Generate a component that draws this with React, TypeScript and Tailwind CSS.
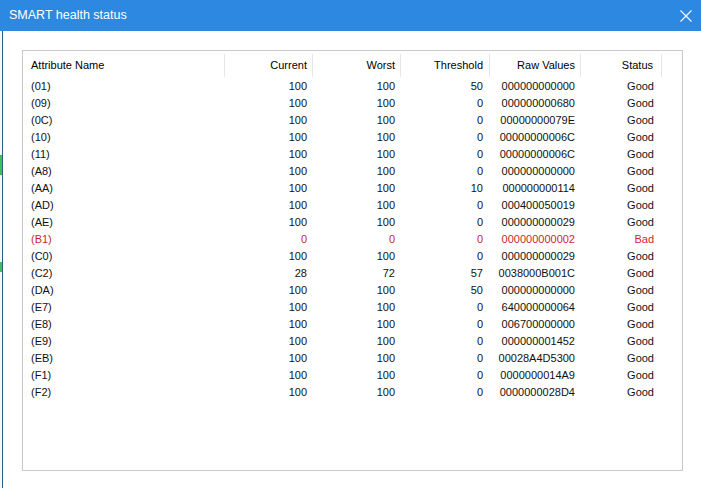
import React from 'react';

type Row = {
  id: string;
  current: string;
  worst: string;
  threshold: string;
  raw: string;
  status: string;
};

const rows: Row[] = [
  { id: '(01)', current: '100', worst: '100', threshold: '50', raw: '000000000000', status: 'Good' },
  { id: '(09)', current: '100', worst: '100', threshold: '0', raw: '000000000680', status: 'Good' },
  { id: '(0C)', current: '100', worst: '100', threshold: '0', raw: '00000000079E', status: 'Good' },
  { id: '(10)', current: '100', worst: '100', threshold: '0', raw: '00000000006C', status: 'Good' },
  { id: '(11)', current: '100', worst: '100', threshold: '0', raw: '00000000006C', status: 'Good' },
  { id: '(A8)', current: '100', worst: '100', threshold: '0', raw: '000000000000', status: 'Good' },
  { id: '(AA)', current: '100', worst: '100', threshold: '10', raw: '000000000114', status: 'Good' },
  { id: '(AD)', current: '100', worst: '100', threshold: '0', raw: '000400050019', status: 'Good' },
  { id: '(AE)', current: '100', worst: '100', threshold: '0', raw: '000000000029', status: 'Good' },
  { id: '(B1)', current: '0', worst: '0', threshold: '0', raw: '000000000002', status: 'Bad' },
  { id: '(C0)', current: '100', worst: '100', threshold: '0', raw: '000000000029', status: 'Good' },
  { id: '(C2)', current: '28', worst: '72', threshold: '57', raw: '0038000B001C', status: 'Good' },
  { id: '(DA)', current: '100', worst: '100', threshold: '50', raw: '000000000000', status: 'Good' },
  { id: '(E7)', current: '100', worst: '100', threshold: '0', raw: '640000000064', status: 'Good' },
  { id: '(E8)', current: '100', worst: '100', threshold: '0', raw: '006700000000', status: 'Good' },
  { id: '(E9)', current: '100', worst: '100', threshold: '0', raw: '000000001452', status: 'Good' },
  { id: '(EB)', current: '100', worst: '100', threshold: '0', raw: '00028A4D5300', status: 'Good' },
  { id: '(F1)', current: '100', worst: '100', threshold: '0', raw: '0000000014A9', status: 'Good' },
  { id: '(F2)', current: '100', worst: '100', threshold: '0', raw: '0000000028D4', status: 'Good' },
];

const CloseIcon = () => (
  <svg width="12" height="12" viewBox="0 0 12 12" fill="none">
    <path d="M0.5 0.5 L11.5 11.5 M11.5 0.5 L0.5 11.5" stroke="white" strokeWidth="1.1" />
  </svg>
);

const App: React.FC = () => {
  return (
    <div
      className="w-[701px] h-[488px] bg-white flex flex-col overflow-hidden text-black"
      style={{ fontFamily: '"Segoe UI", "Liberation Sans", Arial, sans-serif' }}
    >
      {/* title bar */}
      <div className="h-[31px] bg-[#2c88e0] flex items-center justify-between pl-[9px] pr-[9px] shrink-0">
        <span className="text-white text-[12.5px] leading-none">SMART health status</span>
        <CloseIcon />
      </div>

      <div className="flex flex-1">
        {/* bits of the window behind */}
        <div className="w-[2px] flex flex-col bg-[#f4f8f6]">
          <div className="h-[124px]" />
          <div className="h-[20px] bg-[#3cbf5c]" />
          <div className="h-[87px]" />
          <div className="h-[10px] bg-[#3cbf5c]" />
        </div>
        <div className="flex-1 border-l border-[#2f5c7c] pl-[19px] pt-[19px]">
          {/* list view */}
          <div className="w-[661px] h-[421px] border border-[#c9c9c9] text-[11px] leading-none">
            <div className="h-[27px] flex pt-[3px] pb-[1px]">
              <div className="w-[202px] h-[23px] border-r border-[#e6e6e6] pl-[8px] flex items-center">Attribute Name</div>
              <div className="w-[88px] h-[23px] border-r border-[#e6e6e6] pr-[5px] flex items-center justify-end">Current</div>
              <div className="w-[88px] h-[23px] border-r border-[#e6e6e6] pr-[5px] flex items-center justify-end">Worst</div>
              <div className="w-[89px] h-[23px] border-r border-[#e6e6e6] pr-[6px] flex items-center justify-end">Threshold</div>
              <div className="w-[91px] h-[23px] border-r border-[#e6e6e6] pr-[5px] flex items-center justify-end">Raw Values</div>
              <div className="w-[81px] h-[23px] border-r border-[#e6e6e6] pr-[8px] flex items-center justify-end">Status</div>
            </div>
            {rows.map((r) => (
              <div
                key={r.id}
                className={`h-[17px] flex items-center ${r.status === 'Bad' ? 'text-[#cc1f2f]' : 'text-[#111]'}`}
              >
                <div className="w-[202px] pl-[8px]">{r.id}</div>
                <div className="w-[88px] pr-[6px] text-right">{r.current}</div>
                <div className="w-[88px] pr-[6px] text-right">{r.worst}</div>
                <div className="w-[89px] pr-[7px] text-right">{r.threshold}</div>
                <div className="w-[91px] pr-[6px] text-right">{r.raw}</div>
                <div className="w-[81px] pr-[8px] text-right">{r.status}</div>
              </div>
            ))}
          </div>
        </div>
      </div>
    </div>
  );
};

export default App;
